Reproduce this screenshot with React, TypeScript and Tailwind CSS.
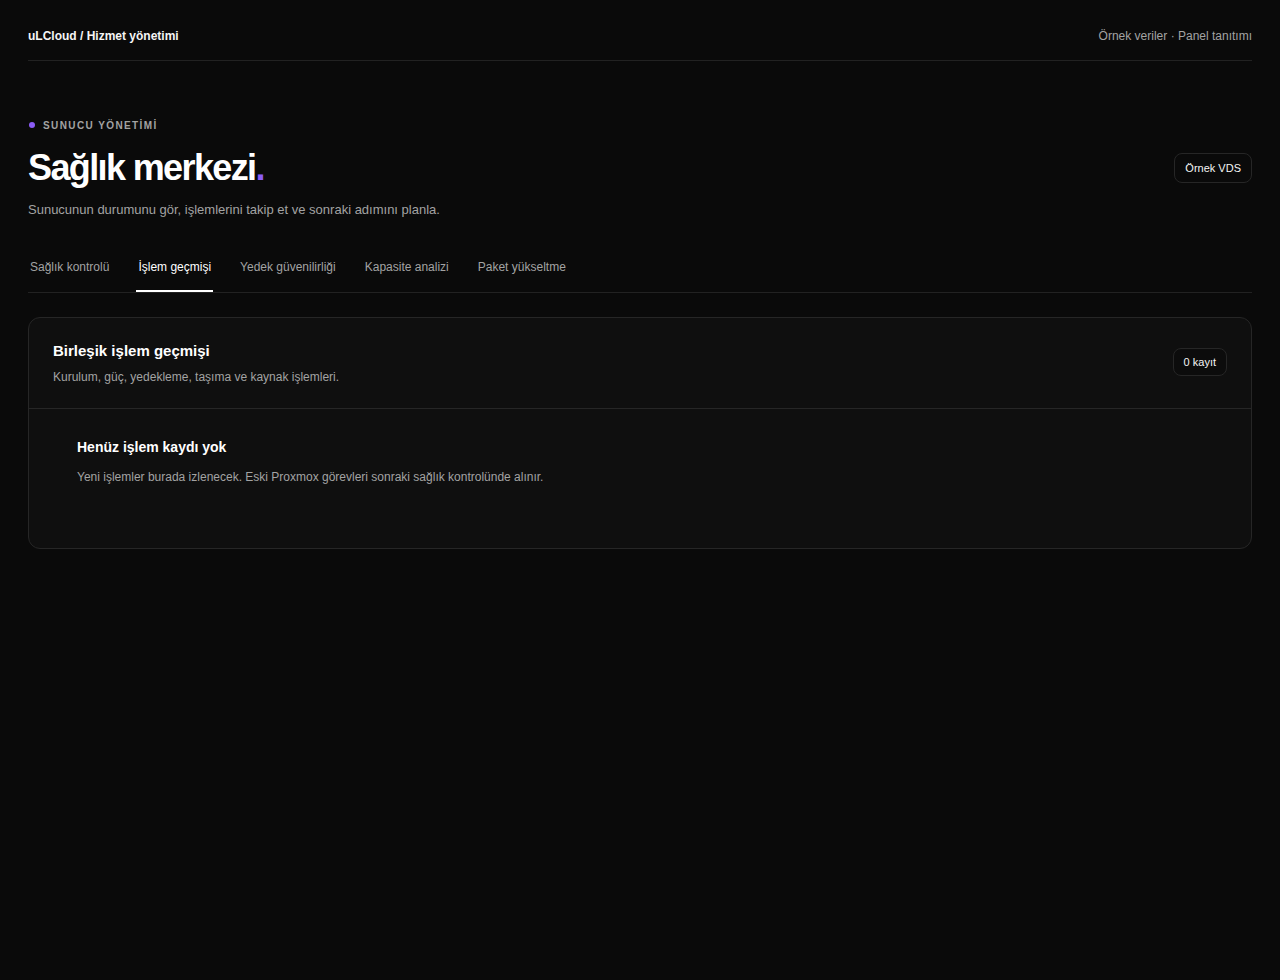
import React from "react";

const tabs = ["Sağlık kontrolü", "İşlem geçmişi", "Yedek güvenilirliği", "Kapasite analizi", "Paket yükseltme"];

export default function App() {
  return (
    <div className="min-h-screen bg-[#0a0a0a] text-white px-7" style={{ fontFamily: '"Liberation Sans", Arial, sans-serif' }}>
      <header className="flex items-center justify-between pt-7 pb-4 border-b border-[#222222]">
        <div className="text-[12px] leading-4 font-bold text-[#f5f5f5]">uLCloud / Hizmet yönetimi</div>
        <div className="text-[12px] leading-4 text-[#a3a3a3]">Örnek veriler · Panel tanıtımı</div>
      </header>

      <section className="mt-14">
        <div className="flex items-center gap-2 h-4">
          <span className="w-[6px] h-[6px] rounded-full bg-[#8b5cf6] ml-[1px]" />
          <span className="text-[10px] font-bold tracking-[0.14em] text-[#a3a3a3]">SUNUCU YÖNETİMİ</span>
        </div>
        <div className="mt-[15px] flex items-center justify-between">
          <h1 className="text-[36px] leading-[40px] font-bold tracking-[-0.045em] text-white">
            Sağlık merkezi<span className="text-[#8b5cf6]">.</span>
          </h1>
          <button className="h-[30px] px-[10px] rounded-lg border border-[#262626] text-[11px] text-[#f5f5f5] bg-[#0a0a0a]">
            Örnek VDS
          </button>
        </div>
        <p className="mt-3 text-[13px] leading-5 text-[#a3a3a3]">
          Sunucunun durumunu gör, işlemlerini takip et ve sonraki adımını planla.
        </p>
      </section>

      <nav className="mt-[28px] flex gap-[25px] border-b border-[#222222]">
        {tabs.map((t, i) => (
          <div
            key={t}
            className={
              "px-0.5 pt-[11px] pb-[15px] text-[12px] leading-4 border-b-2 " +
              (i === 1 ? "border-white text-white" : "border-transparent text-[#a3a3a3]")
            }
          >
            {t}
          </div>
        ))}
      </nav>

      <div className="mt-6 rounded-xl border border-[#262626] bg-[#0f0f0f]">
        <div className="flex items-center justify-between px-6 pt-[21px] pb-[23px] border-b border-[#262626]">
          <div>
            <h2 className="text-[15px] leading-6 font-bold text-white">Birleşik işlem geçmişi</h2>
            <p className="mt-1.5 text-[12px] leading-4 text-[#a3a3a3]">
              Kurulum, güç, yedekleme, taşıma ve kaynak işlemleri.
            </p>
          </div>
          <span className="h-[28px] px-[10px] flex items-center rounded-lg border border-[#262626] bg-[#0c0c0c] text-[11px] text-[#f5f5f5]">
            0 kayıt
          </span>
        </div>
        <div className="px-12 pt-7 pb-[63px]">
          <h3 className="text-[14px] leading-5 font-bold text-white">Henüz işlem kaydı yok</h3>
          <p className="mt-3 text-[12px] leading-4 text-[#a3a3a3]">
            Yeni işlemler burada izlenecek. Eski Proxmox görevleri sonraki sağlık kontrolünde alınır.
          </p>
        </div>
      </div>
    </div>
  );
}
